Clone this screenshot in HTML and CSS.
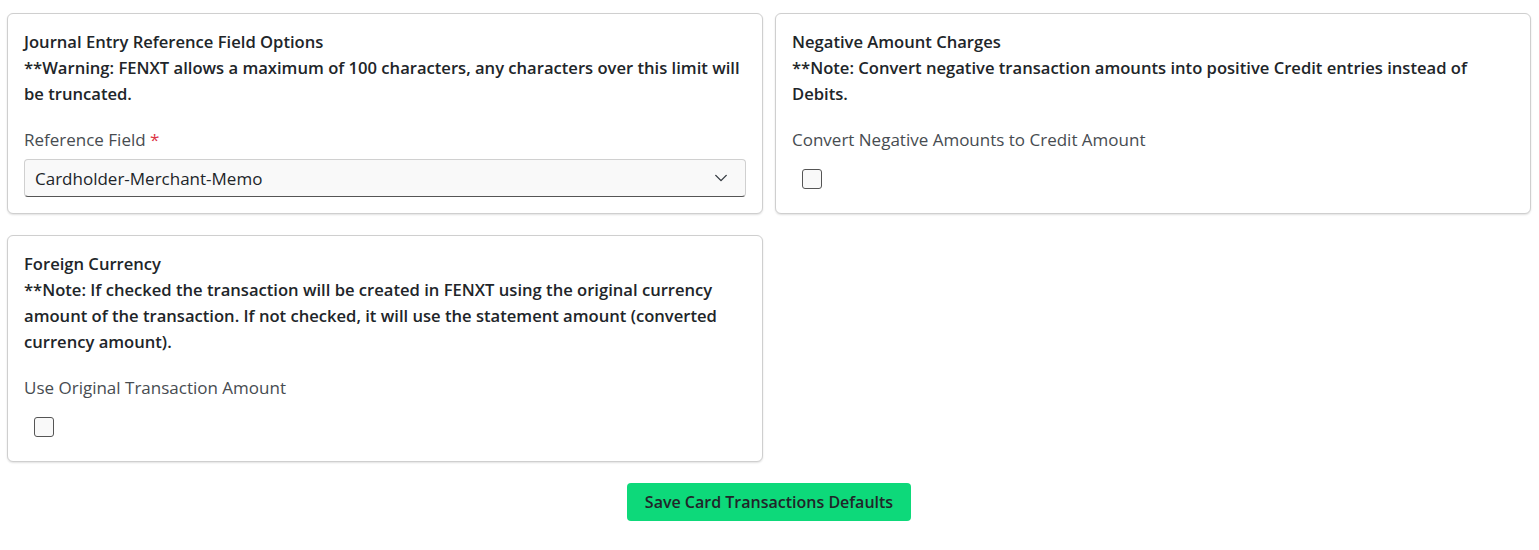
FILE: index.html
```html
<!DOCTYPE html>
<html>
<head>
<meta charset="utf-8">
<link rel="stylesheet" href="styles.css">
</head>
<body>
<div class="page">
  <div class="grid">
    <div class="card">
      <div class="heading">Journal Entry Reference Field Options</div>
      <div class="heading">**Warning: FENXT allows a maximum of 100 characters, any characters over this limit will be truncated.</div>
      <div class="field">
        <label class="label">Reference Field <span class="req">*</span></label>
        <div class="select">
          <span>Cardholder-Merchant-Memo</span>
          <svg class="chev" width="14" height="14" viewBox="0 0 16 16"><path d="M2 5l6 6 6-6" fill="none" stroke="#343a40" stroke-width="1.6" stroke-linecap="round" stroke-linejoin="round"/></svg>
        </div>
      </div>
    </div>
    <div class="card">
      <div class="heading">Negative Amount Charges</div>
      <div class="heading">**Note: Convert negative transaction amounts into positive Credit entries instead of Debits.</div>
      <div class="field">
        <label class="label">Convert Negative Amounts to Credit Amount</label>
        <div class="check"><span class="box"></span></div>
      </div>
    </div>
    <div class="card">
      <div class="heading">Foreign Currency</div>
      <div class="heading">**Note: If checked the transaction will be created in FENXT using the original currency amount of the transaction. If not checked, it will use the statement amount (converted currency amount).</div>
      <div class="field">
        <label class="label">Use Original Transaction Amount</label>
        <div class="check"><span class="box"></span></div>
      </div>
    </div>
  </div>
  <div class="actions">
    <button class="btn">Save Card Transactions Defaults</button>
  </div>
</div>
</body>
</html>
```
FILE: styles.css
```css
* { box-sizing: border-box; }
body {
  margin: 0;
  font-family: "Open Sans", "Noto Sans", sans-serif;
  font-size: 17px;
  color: #212529;
  background: #fff;
}
.page {
  padding: 13px 8px 0 7px;
}
.grid {
  display: grid;
  grid-template-columns: 1fr 1fr;
  column-gap: 12px;
  row-gap: 21px;
  align-items: stretch;
}
.card {
  border: 1px solid #cfcfcf;
  border-radius: 6px;
  box-shadow: 0 1px 2px rgba(0,0,0,0.12);
  padding: 15px 16px 15px 16px;
  background: #fff;
}
.heading {
  font-size: 16.6px;
  font-weight: 600;
  line-height: 26px;
  color: #212529;
}
.field {
  margin-top: 20px;
}
.label {
  display: block;
  line-height: 26px;
  color: #474c51;
  margin-bottom: 6px;
}
.req { color: #dc3545; }
.select {
  height: 38px;
  border: 1px solid #d0d0d0;
  border-bottom: 1px solid #555;
  border-radius: 4px;
  background: #f9f9f9;
  display: flex;
  align-items: center;
  justify-content: space-between;
  padding: 0 17px 0 10px;
  color: #212529;
}
.chev { display: block; }
.check {
  padding: 10px 0 9px 10px;
}
.box {
  display: block;
  width: 20px;
  height: 20px;
  border: 1px solid #555;
  border-radius: 3px;
  background: #f9f9f9;
}
.actions {
  display: flex;
  justify-content: center;
  margin-top: 21px;
}
.btn {
  font-family: inherit;
  font-size: 16px;
  font-weight: 600;
  color: #212529;
  background: #0dd97a;
  border: none;
  border-radius: 4px;
  height: 38px;
  padding: 0 18px;
}
```
